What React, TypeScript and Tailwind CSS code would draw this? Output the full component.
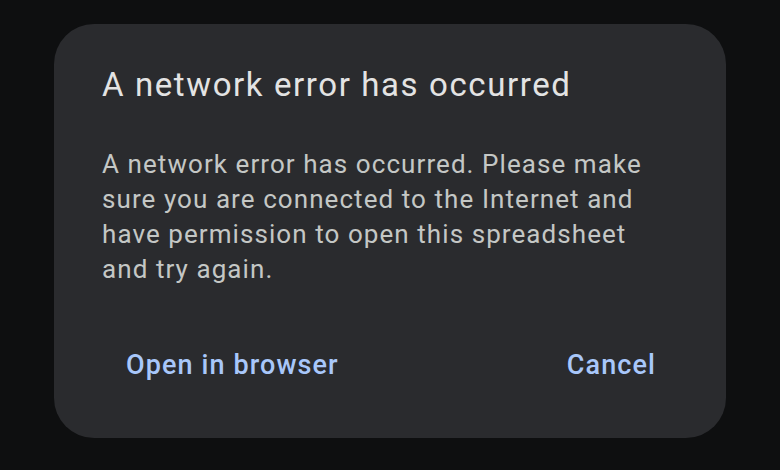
export default function App() {
  return (
    <div
      className="flex h-[470px] w-[780px] items-start bg-[#0e0f10] pl-[54px] pt-[24px]"
      style={{ fontFamily: "Roboto, 'Noto Sans', sans-serif" }}
    >
      <div className="flex h-[414px] w-[672px] flex-col rounded-[40px] bg-[#2a2b2e] pl-[48px] pr-[48px] pt-[41px]">
        <h2 className="text-[33px] leading-[40px] tracking-[1.6px] text-[#e3e3e3]">A network error has occurred</h2>
        <p className="mt-[42px] text-[26px] leading-[35px] tracking-[1.07px] text-[#c4c7c5]">
          A network error has occurred. Please make
          <br />
          sure you are connected to the Internet and
          <br />
          have permission to open this spreadsheet
          <br />
          and try again.
        </p>
        <div className="mt-[60px] flex items-center justify-between pl-[24px] pr-[22px]">
          <button className="text-[27px] font-medium leading-[36px] tracking-[1.1px] text-[#a8c7fa]">Open in browser</button>
          <button className="text-[27px] font-medium leading-[36px] tracking-[1.1px] text-[#a8c7fa]">Cancel</button>
        </div>
      </div>
    </div>
  );
}
